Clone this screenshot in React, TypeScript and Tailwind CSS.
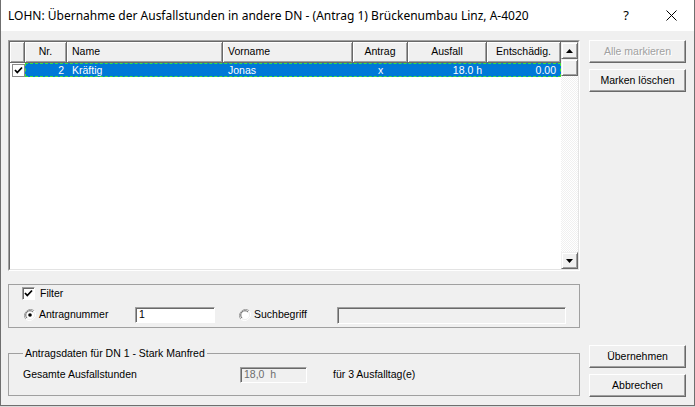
import React from 'react';

const ui = { fontFamily: '"Liberation Sans", Arial, sans-serif' };

const columns = [
  { label: 'Nr.', head: 'w-[42px] justify-center', cell: 'w-[41px] justify-end pr-[3px]', value: '2' },
  { label: 'Name', head: 'w-[156px] justify-start pl-[5px]', cell: 'w-[156px] justify-start pl-[5px]', value: 'Kräftig' },
  { label: 'Vorname', head: 'w-[130px] justify-start pl-[5px]', cell: 'w-[130px] justify-start pl-[5px]', value: 'Jonas' },
  { label: 'Antrag', head: 'w-[55px] justify-center', cell: 'w-[55px] justify-center', value: 'x' },
  { label: 'Ausfall', head: 'w-[79px] justify-center', cell: 'w-[79px] justify-end pr-[5px]', value: '18.0 h' },
  { label: 'Entschädig.', head: 'w-[74px] justify-center', cell: 'w-[73px] justify-end pr-[4px]', value: '0.00' },
];

const CheckMark = () => (
  <svg width="11" height="11" viewBox="0 0 11 11">
    <polyline points="2,5 4.3,7.5 9,2.5" fill="none" stroke="#000" strokeWidth="1.8" />
  </svg>
);

const Radio = ({ on }: { on?: boolean }) => (
  <svg width="12" height="12" viewBox="0 0 12 12">
    <path d="M10.2 1.8 A6 6 0 0 0 1.8 10.2" fill="none" stroke="#a0a0a0" strokeWidth="1" />
    <path d="M1.8 10.2 A6 6 0 0 0 10.2 1.8" fill="none" stroke="#ffffff" strokeWidth="1" />
    <circle cx="6" cy="6" r="4.5" fill="#fff" stroke="#e3e3e3" strokeWidth="0.5" />
    <path d="M9 3 A4.2 4.2 0 0 0 3 9" fill="none" stroke="#696969" strokeWidth="1" />
    {on && <circle cx="6" cy="6" r="1.8" fill="#000" />}
  </svg>
);

const Button = ({ children, disabled }: { children: React.ReactNode; disabled?: boolean }) => (
  <div
    className={`h-[23px] w-[97px] flex items-center justify-center bg-[#f0f0f0] border border-t-white border-l-white border-r-[#696969] border-b-[#696969] shadow-[inset_-1px_-1px_0_#a0a0a0] text-[10.5px] ${
      disabled ? 'text-[#a0a0a0] [text-shadow:1px_1px_0_#fff]' : 'text-black'
    }`}
  >
    {children}
  </div>
);

const ScrollBtn = ({ down }: { down?: boolean }) => (
  <div className="h-[17px] w-[17px] flex items-center justify-center bg-[#f0f0f0] border border-t-[#f0f0f0] border-l-[#f0f0f0] border-r-[#696969] border-b-[#696969] shadow-[inset_1px_1px_0_#fff,inset_-1px_-1px_0_#a0a0a0]">
    <svg width="7" height="4" viewBox="0 0 7 4">
      {down ? <polygon points="0,0 7,0 3.5,4" fill="#000" /> : <polygon points="0,4 7,4 3.5,0" fill="#000" />}
    </svg>
  </div>
);

export default function App() {
  return (
    <div className="w-[695px] h-[407px] bg-[#dadada]" style={ui}>
      <div className="w-[695px] h-[406px] flex flex-col bg-[#f0f0f0] border-l border-r border-b border-[#6f6f6f]">
        {/* title bar */}
        <div className="h-[31px] bg-white flex items-center pl-[7px] text-[12px] text-black" style={{ fontFamily: '"Noto Sans", sans-serif' }}>
          <span className="flex-1">LOHN: Übernahme der Ausfallstunden in andere DN - (Antrag 1) Brückenumbau Linz, A-4020</span>
          <span className="w-[46px] text-center text-[13px]">?</span>
          <span className="w-[45px] flex justify-center">
            <svg width="11" height="11" viewBox="0 0 11 11">
              <path d="M0.5 0.5 L10.5 10.5 M10.5 0.5 L0.5 10.5" stroke="#000" strokeWidth="1" />
            </svg>
          </span>
        </div>

        {/* body */}
        <div className="flex-1 flex pt-[9px] pb-[8px] pl-[7px]">
          <div className="w-[572px] flex flex-col">
            {/* list view */}
            <div className="h-[231px] border border-t-[#a0a0a0] border-l-[#a0a0a0] border-r-white border-b-white">
              <div className="h-full flex border border-t-[#696969] border-l-[#696969] border-r-[#e3e3e3] border-b-[#e3e3e3] bg-white">
                <div className="flex-1 flex flex-col text-[10.5px]">
                  <div className="h-[21px] flex">
                    <div className="w-[15px] h-full bg-[#f0f0f0] border-r border-b border-[#696969] shadow-[inset_1px_1px_0_#fff,inset_-1px_-1px_0_#a0a0a0]" />
                    {columns.map((c) => (
                      <div
                        key={c.label}
                        className={`${c.head} h-full flex items-center bg-[#f0f0f0] border-r border-b border-[#696969] shadow-[inset_1px_1px_0_#fff,inset_-1px_-1px_0_#a0a0a0]`}
                      >
                        {c.label}
                      </div>
                    ))}
                  </div>
                  <div className="h-[14px] flex">
                    <div className="w-[15px] flex items-center pl-[2px]">
                      <div className="w-[13px] h-[13px] flex items-center justify-center border border-[#8a8a8a] bg-white">
                        <CheckMark />
                      </div>
                    </div>
                    <div className="flex bg-[#0078d7] text-white border border-dashed border-[#3be23b]">
                      {columns.map((c) => (
                        <div key={c.label} className={`${c.cell} flex items-center leading-none`}>
                          {c.value}
                        </div>
                      ))}
                    </div>
                  </div>
                </div>
                {/* scrollbar */}
                <div className="w-[17px] flex flex-col bg-[repeating-conic-gradient(#f0f0f0_0_25%,#ffffff_0_50%)] bg-[length:2px_2px]">
                  <ScrollBtn />
                  <div className="h-[17px] w-[17px] bg-[#f0f0f0] border border-t-[#f0f0f0] border-l-[#f0f0f0] border-r-[#696969] border-b-[#696969] shadow-[inset_1px_1px_0_#fff,inset_-1px_-1px_0_#a0a0a0]" />
                  <div className="flex-1" />
                  <ScrollBtn down />
                </div>
              </div>
            </div>

            {/* filter group */}
            <div className="mt-[13px] h-[44px] border border-[#a0a0a0] flex flex-col pl-[13px] pt-[1px] text-[10.5px]">
              <div className="h-[15px] flex items-center gap-[5px]">
                <div className="w-[13px] h-[13px] flex items-center justify-center bg-white border border-t-[#a0a0a0] border-l-[#a0a0a0] border-r-white border-b-white shadow-[inset_1px_1px_0_#696969]">
                  <CheckMark />
                </div>
                <span>Filter</span>
              </div>
              <div className="mt-[6px] h-[16px] flex items-center">
                <span className="w-[17px] flex pl-[2px]"><Radio on /></span>
                <span className="w-[96px]">Antragnummer</span>
                <div className="w-[80px] h-[16px] bg-white flex items-center pl-[3px] border border-t-[#a0a0a0] border-l-[#a0a0a0] border-r-white border-b-white shadow-[inset_1px_1px_0_#696969]">1</div>
                <span className="w-[15px] ml-[24px] flex"><Radio /></span>
                <span className="w-[83px]">Suchbegriff</span>
                <div className="w-[229px] h-[17px] bg-[#f0f0f0] border border-t-[#a0a0a0] border-l-[#a0a0a0] border-r-white border-b-white shadow-[inset_1px_1px_0_#696969]" />
              </div>
            </div>

            {/* Antragsdaten group */}
            <fieldset className="mt-[19px] border border-[#a0a0a0] text-[10.5px]">
              <legend className="ml-[14px] px-[2px] leading-[13px]">Antragsdaten für DN 1 - Stark Manfred</legend>
              <div className="mt-[7px] mb-[12px] h-[16px] flex items-center pl-[14px]">
                <span className="w-[217px]">Gesamte Ausfallstunden</span>
                <div className="w-[67px] h-[16px] flex items-center pl-[3px] text-[#6d6d6d] bg-[#f0f0f0] border border-t-[#a0a0a0] border-l-[#a0a0a0] border-r-white border-b-white shadow-[inset_1px_1px_0_#696969]">
                  18,0&nbsp; h
                </div>
                <span className="ml-[26px]">für 3 Ausfalltag(e)</span>
              </div>
            </fieldset>
          </div>

          {/* buttons */}
          <div className="ml-[9px] flex flex-col">
            <Button disabled>Alle markieren</Button>
            <div className="mt-[6px]">
              <Button>Marken löschen</Button>
            </div>
            <div className="mt-auto">
              <Button>Übernehmen</Button>
            </div>
            <div className="mt-[6px]">
              <Button>Abbrechen</Button>
            </div>
          </div>
        </div>
      </div>
    </div>
  );
}
